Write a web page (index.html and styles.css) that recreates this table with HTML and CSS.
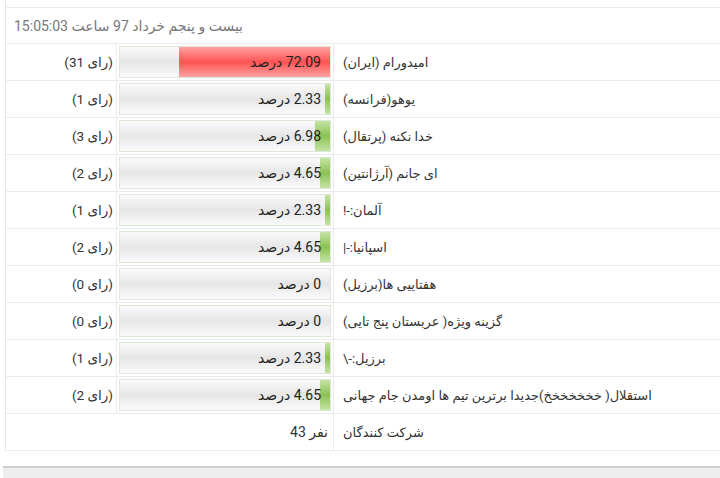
FILE: index.html
```html
<!DOCTYPE html>
<html>
<head>
<meta charset="utf-8">
<link rel="stylesheet" href="styles.css">
</head>
<body>
<div class="page">
  <table class="poll">
    <colgroup><col class="c-votes"><col class="c-bar"><col class="c-label"></colgroup>
    <tr class="stub"><td colspan="3"></td></tr>
    <tr class="head"><td colspan="3"><span class="date">بیست و پنجم خرداد 97 ساعت 15:05:03</span></td></tr>
    <tr><td class="votes"><span class="lt">(31 <span class="ar">رای</span>)</span></td><td class="barcell"><div class="bar"><div class="fill red" style="width:72.09%"></div><span class="pct">72.09 درصد</span></div></td><td class="label">امیدورام (ایران)</td></tr>
    <tr><td class="votes"><span class="lt">(1 <span class="ar">رای</span>)</span></td><td class="barcell"><div class="bar"><div class="fill" style="width:2.33%"></div><span class="pct">2.33 درصد</span></div></td><td class="label">یوهو(فرانسه)</td></tr>
    <tr><td class="votes"><span class="lt">(3 <span class="ar">رای</span>)</span></td><td class="barcell"><div class="bar"><div class="fill" style="width:6.98%"></div><span class="pct">6.98 درصد</span></div></td><td class="label">خدا نکنه (پرتقال)</td></tr>
    <tr><td class="votes"><span class="lt">(2 <span class="ar">رای</span>)</span></td><td class="barcell"><div class="bar"><div class="fill" style="width:4.65%"></div><span class="pct">4.65 درصد</span></div></td><td class="label">ای جانم (آرژانتین)</td></tr>
    <tr><td class="votes"><span class="lt">(1 <span class="ar">رای</span>)</span></td><td class="barcell"><div class="bar"><div class="fill" style="width:2.33%"></div><span class="pct">2.33 درصد</span></div></td><td class="label">آلمان:-!</td></tr>
    <tr><td class="votes"><span class="lt">(2 <span class="ar">رای</span>)</span></td><td class="barcell"><div class="bar"><div class="fill" style="width:4.65%"></div><span class="pct">4.65 درصد</span></div></td><td class="label">اسپانیا:-|</td></tr>
    <tr><td class="votes"><span class="lt">(0 <span class="ar">رای</span>)</span></td><td class="barcell"><div class="bar"><span class="pct">0 درصد</span></div></td><td class="label">هفتاییی ها(برزیل)</td></tr>
    <tr><td class="votes"><span class="lt">(0 <span class="ar">رای</span>)</span></td><td class="barcell"><div class="bar"><span class="pct">0 درصد</span></div></td><td class="label">گزینه ویژه( عربستان پنج تایی)</td></tr>
    <tr><td class="votes"><span class="lt">(1 <span class="ar">رای</span>)</span></td><td class="barcell"><div class="bar"><div class="fill" style="width:2.33%"></div><span class="pct">2.33 درصد</span></div></td><td class="label">برزیل:-\</td></tr>
    <tr><td class="votes"><span class="lt">(2 <span class="ar">رای</span>)</span></td><td class="barcell"><div class="bar"><div class="fill" style="width:4.65%"></div><span class="pct">4.65 درصد</span></div></td><td class="label">استقلال( خخخخخخخ)جدیدا برترین تیم ها اومدن جام جهانی</td></tr>
    <tr><td class="total" colspan="2"><span class="lt">43 <span class="ar">نفر</span></span></td><td class="label">شرکت کنندگان</td></tr>
  </table>
  <div class="footer"></div>
</div>
</body>
</html>
```

FILE: styles.css
```css
html, body {
  margin: 0;
  padding: 0;
  background: #fff;
  overflow: hidden;
}
body {
  width: 720px;
  height: 478px;
  font-family: Roboto, "DejaVu Sans", sans-serif;
  font-size: 13px;
  color: #333;
}
.page {
  width: 740px;
}
.poll {
  margin-left: 5px;
  width: 740px;
  border-collapse: collapse;
  table-layout: fixed;
  border-left: 1px solid #e6e6e6;
}
.c-votes { width: 111px; }
.c-bar { width: 217px; }
.poll td {
  border: 1px solid #ebebeb;
  border-left: 1px solid #e6e6e6;
  padding: 0;
  height: 36px;
  vertical-align: middle;
}
.poll tr.stub td {
  height: 7px;
  border-top: none;
}
.poll tr.head td {
  height: 35px;
  padding-left: 8px;
  text-align: left;
}
.date {
  direction: rtl;
  unicode-bidi: embed;
  color: #777;
  font-size: 14px;
}
.lt {
  direction: ltr;
  unicode-bidi: bidi-override;
}
.ar {
  direction: rtl;
  unicode-bidi: isolate;
}
.votes {
  text-align: right;
  padding-right: 3px !important;
  font-size: 13.5px;
}
.barcell {
  padding: 0 2px !important;
}
.bar {
  position: relative;
  height: 30px;
  border: 1px solid #dde8d6;
  background: linear-gradient(to bottom, #fbfbfb 0%, #e6e6e6 50%, #fbfbfb 100%);
  display: flex;
  justify-content: flex-end;
  align-items: center;
}
.fill {
  position: absolute;
  top: 0;
  bottom: 0;
  right: 0;
  background: linear-gradient(to bottom, #c6e3a6 0%, #8cc155 50%, #c6e3a6 100%);
}
.fill.red {
  background: linear-gradient(to bottom, #ffa3a3 0%, #ff5252 50%, #ffa3a3 100%);
}
.pct {
  position: relative;
  direction: rtl;
  padding-right: 9px;
  color: #222;
  font-size: 14px;
}
.total {
  text-align: right;
  padding-right: 5px !important;
  font-size: 14px;
}
.label {
  direction: rtl;
  text-align: left;
  padding-left: 9px !important;
}
.footer {
  margin-top: 15px;
  margin-left: 3px;
  height: 14px;
  border-top: 2px solid #cfcfcf;
  background: #eeeeee;
}
```
